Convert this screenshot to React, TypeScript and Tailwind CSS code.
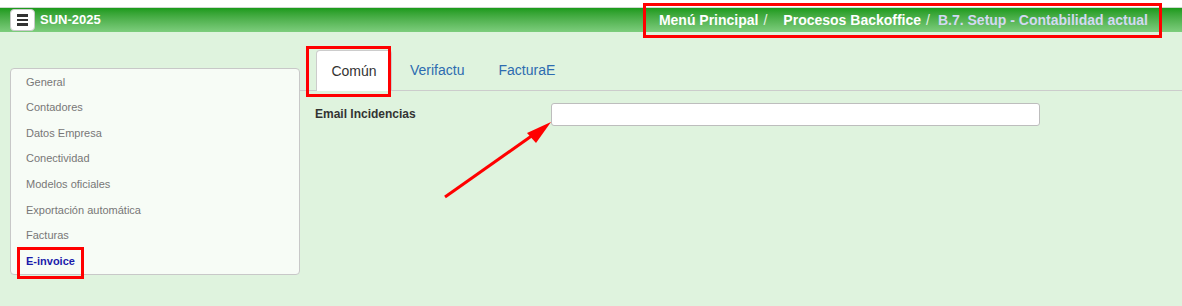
const sideItems = [
  'General',
  'Contadores',
  'Datos Empresa',
  'Conectividad',
  'Modelos oficiales',
  'Exportación automática',
  'Facturas',
  'E-invoice',
];

const tabs = ['Común', 'Verifactu', 'FacturaE'];

function Breadcrumb() {
  return (
    <div className="flex items-center text-[14px] font-bold text-white">
      <span>Menú Principal</span>
      <span className="ml-[5px] font-normal text-[#e6f2e6]">/</span>
      <span className="ml-[16px]">Procesos Backoffice</span>
      <span className="ml-[5px] font-normal text-[#e6f2e6]">/</span>
      <span className="ml-[8px] text-[#d3d9f2]">B.7. Setup - Contabilidad actual</span>
    </div>
  );
}

export default function App() {
  return (
    <div className="relative h-[306px] w-[1182px] overflow-hidden bg-[#dff3de] font-['Liberation_Sans',Arial,sans-serif]">
      <div className="h-[7px] bg-white" />
      <div className="flex h-[25px] items-center justify-between border-t border-[#cfd8cf] bg-gradient-to-b from-[#199a19] to-[#7dcd7d] pl-[10px] pr-[34px]">
        <div className="flex items-center gap-[5px]">
          <div className="flex h-[22px] w-[25px] flex-col items-center justify-center gap-[2px] rounded-[4px] border border-[#c9c9c9] bg-white">
            <span className="h-[2.5px] w-[11px] bg-[#333]" />
            <span className="h-[2.5px] w-[11px] bg-[#333]" />
            <span className="h-[2.5px] w-[11px] bg-[#333]" />
          </div>
          <span className="text-[13px] font-bold text-white">SUN-2025</span>
        </div>
        <Breadcrumb />
      </div>

      <div className="flex">
        <aside className="ml-[10px] mt-[36px] w-[290px] shrink-0">
          <ul className="rounded-[4px] border border-[#c8c8c8] bg-[#f7fcf6]">
            {sideItems.map((item) => (
              <li
                key={item}
                className={
                  item === 'E-invoice'
                    ? 'flex h-[25.6px] items-center pl-[15px] text-[11px] font-bold text-[#1b1bab]'
                    : 'flex h-[25.6px] items-center pl-[15px] text-[11px] text-[#777]'
                }
              >
                {item}
              </li>
            ))}
          </ul>
        </aside>

        <main className="mt-[18px] flex-1">
          <ul className="flex border-b border-[#cccccc] pl-[16px]">
            {tabs.map((tab, i) => (
              <li
                key={tab}
                className={
                  i === 0
                    ? '-mb-px mr-[2px] flex h-[41px] w-[76px] items-center justify-center rounded-t-[4px] border border-b-0 border-[#cccccc] bg-white text-[14px] text-[#333]'
                    : 'mr-[2px] flex h-[40px] items-center px-[16px] text-[14px] text-[#2d6cb0]'
                }
              >
                {tab}
              </li>
            ))}
          </ul>
          <div className="mt-[12px] flex items-start pl-[15px]">
            <label className="mt-[2px] w-[236px] text-[12px] font-bold text-[#333]">Email Incidencias</label>
            <input
              type="text"
              className="h-[23px] w-[489px] rounded-[3px] border border-[#bdbdbd] bg-white"
            />
          </div>
        </main>
      </div>

      {/* annotations */}
      <div className="absolute left-[643px] top-[3px] h-[35px] w-[519px] border-[3px] border-[#ff0000]" />
      <div className="absolute left-[306px] top-[46px] h-[51px] w-[85px] border-[3px] border-[#ff0000]" />
      <div className="absolute left-[17px] top-[247px] h-[32px] w-[67px] border-[3px] border-[#ff0000]" />
      <svg className="absolute left-0 top-0" width="1182" height="306">
        <line x1="445" y1="197" x2="540" y2="130" stroke="#ff0000" strokeWidth="3" />
        <polygon points="551,122 527,133 536,143" fill="#ff0000" />
      </svg>
    </div>
  );
}
